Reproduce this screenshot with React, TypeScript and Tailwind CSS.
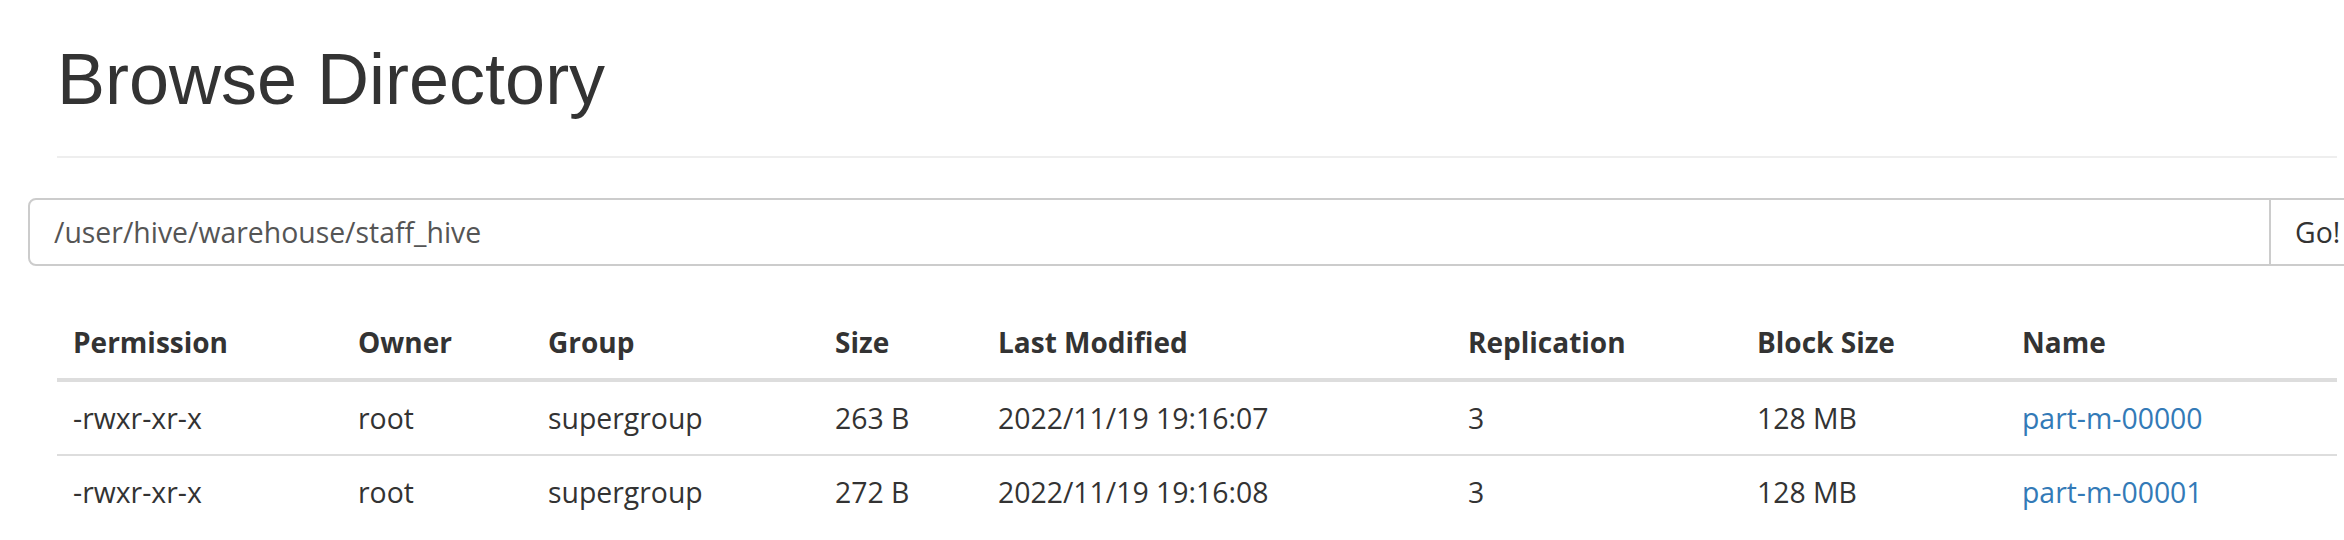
const columns = [
  { label: "Permission", width: "w-[285px]" },
  { label: "Owner", width: "w-[190px]" },
  { label: "Group", width: "w-[287px]" },
  { label: "Size", width: "w-[163px]" },
  { label: "Last Modified", width: "w-[470px]" },
  { label: "Replication", width: "w-[289px]" },
  { label: "Block Size", width: "w-[265px]" },
  { label: "Name", width: "w-[331px]" },
];

const files = [
  { perm: "-rwxr-xr-x", owner: "root", group: "supergroup", size: "263 B", modified: "2022/11/19 19:16:07", repl: "3", block: "128 MB", name: "part-m-00000" },
  { perm: "-rwxr-xr-x", owner: "root", group: "supergroup", size: "272 B", modified: "2022/11/19 19:16:08", repl: "3", block: "128 MB", name: "part-m-00001" },
];

export default function App() {
  return (
    <div className="w-[2344px] h-[540px] overflow-hidden bg-white text-[#333]">
      <div className="ml-[57px] w-[2280px] pt-[40px] pb-[17px] border-b-2 border-[#eee]">
        <h1 className="mb-[20px] text-[72px] leading-[79.2px] font-normal text-[#333] font-['Liberation_Sans',Arial,sans-serif]">
          Browse Directory
        </h1>
      </div>

      <div className="mt-[40px] ml-[28px] flex h-[68px] w-max font-['Open_Sans',sans-serif] text-[28.4px]">
        <input
          readOnly
          value="/user/hive/warehouse/staff_hive"
          className="w-[2243px] h-[68px] px-[24px] text-[#555] leading-[40px] border-2 border-[#ccc] rounded-l-[8px] outline-none"
        />
        <button className="-ml-[2px] h-[68px] px-[24px] bg-white text-[#333] border-2 border-[#ccc] rounded-r-[8px] leading-[40px]">
          Go!
        </button>
      </div>

      <table className="mt-[40px] ml-[57px] w-[2280px] table-fixed border-separate border-spacing-0 font-['Open_Sans',sans-serif] text-[28px] leading-[40px]">
        <thead>
          <tr>
            {columns.map(c => (
              <th key={c.label} className={`${c.width} p-[16px] text-left font-bold border-b-4 border-[#ddd]`}>
                {c.label}
              </th>
            ))}
          </tr>
        </thead>
        <tbody className="text-[28.4px]">
          {files.map((f, i) => {
            const cell = i === 0 ? "p-[16px]" : "p-[16px] border-t-2 border-[#ddd]";
            return (
              <tr key={f.name}>
                <td className={cell}>{f.perm}</td>
                <td className={cell}>{f.owner}</td>
                <td className={cell}>{f.group}</td>
                <td className={cell}>{f.size}</td>
                <td className={cell}>{f.modified}</td>
                <td className={cell}>{f.repl}</td>
                <td className={cell}>{f.block}</td>
                <td className={cell}>
                  <a href="#" className="text-[#337ab7]">{f.name}</a>
                </td>
              </tr>
            );
          })}
        </tbody>
      </table>
    </div>
  );
}
